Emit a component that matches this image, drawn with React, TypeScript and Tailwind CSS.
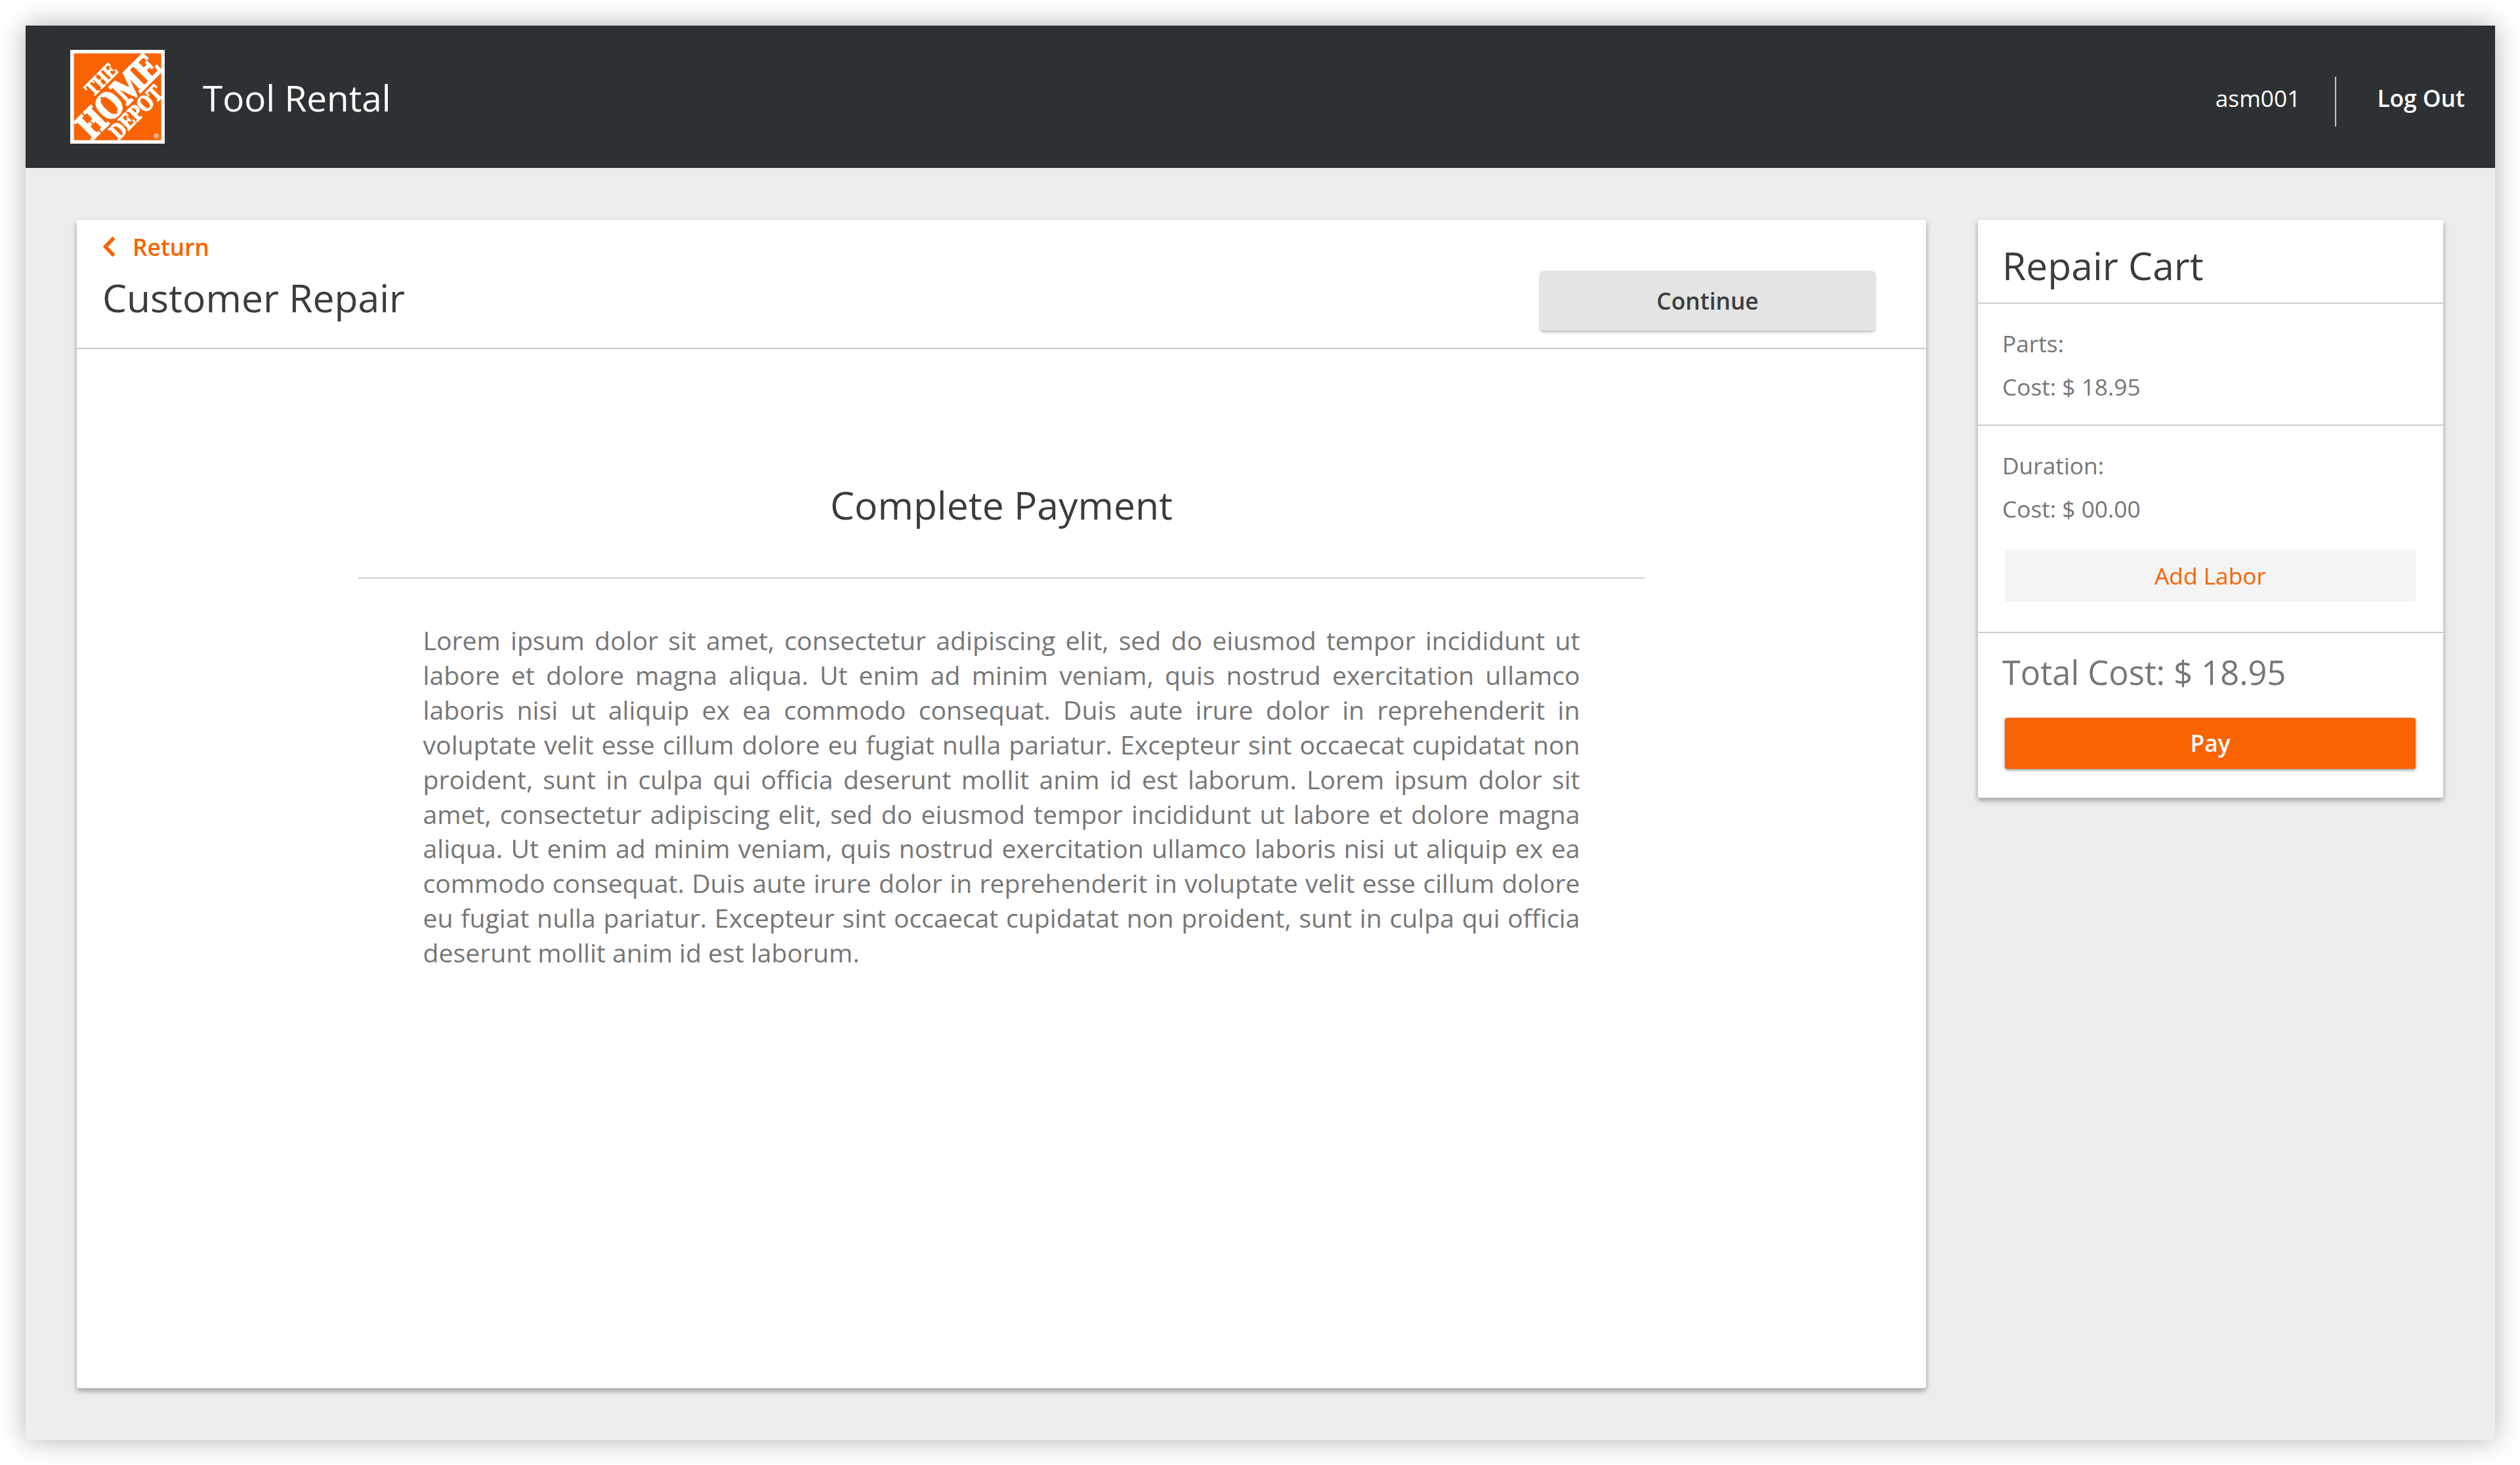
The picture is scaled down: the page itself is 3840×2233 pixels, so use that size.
import React from 'react';

const lorem =
  'Lorem ipsum dolor sit amet, consectetur adipiscing elit, sed do eiusmod tempor incididunt ut labore et dolore magna aliqua. Ut enim ad minim veniam, quis nostrud exercitation ullamco laboris nisi ut aliquip ex ea commodo consequat. Duis aute irure dolor in reprehenderit in voluptate velit esse cillum dolore eu fugiat nulla pariatur. Excepteur sint occaecat cupidatat non proident, sunt in culpa qui officia deserunt mollit anim id est laborum.';

const Logo = () => {
  return (
    <svg viewBox="20 48 431 428" className="w-[144px] h-[143px]" preserveAspectRatio="none">
      <defs>
        <clipPath id="logo-square">
          <rect x="37" y="64" width="398" height="396" />
        </clipPath>
      </defs>
      <rect x="20" y="48" width="431" height="428" fill="#fff" />
      <rect x="37" y="64" width="398" height="396" fill="#f96302" />
      <g clipPath="url(#logo-square)">
        <g transform="rotate(-45)" fill="#fff" stroke="#fff" fontFamily="'Liberation Serif', serif" fontWeight="700">
          <text x="-99" y="275" fontSize="96" strokeWidth="4" textLength="166" lengthAdjust="spacingAndGlyphs">THE</text>
          <text x="-242" y="411" fontSize="178" strokeWidth="9" textLength="458" lengthAdjust="spacingAndGlyphs">HOME</text>
          <text x="-156" y="496" fontSize="103" strokeWidth="5" textLength="297" lengthAdjust="spacingAndGlyphs">DEPOT</text>
        </g>
        {/* stencil cuts */}
        <g transform="rotate(-45)" fill="none" stroke="#f96302">
          <path d="M-74 300v104" strokeWidth="9" />
          <path d="M-186 338v30" strokeWidth="6" />
          <path d="M-16 236v14" strokeWidth="4" />
        </g>
      </g>
      <circle cx="413" cy="441" r="10.5" fill="none" stroke="#fff" strokeWidth="2.5" />
      <text x="413" y="447" fontSize="16" fontWeight="700" fill="#fff" textAnchor="middle" fontFamily="'Liberation Sans', sans-serif">R</text>
    </svg>
  );
};

const Header = () => {
  return (
    <div className="bg-[#2d3134] h-[217px] flex items-center justify-between pl-[68px] pr-[46px] text-white">
      <div className="flex items-center">
        <Logo />
        <span className="ml-[58px] mt-[3px] text-[54.9px] leading-[70px]">Tool Rental</span>
      </div>
      <div className="flex items-center mt-1">
        <span className="mb-[2px] text-[35.3px] leading-[40px]">asm001</span>
        <div className="w-[2px] h-[76px] ml-[53px] mr-[62px] mt-[10px] bg-[#c8caca]" />
        <span className="mb-[2px] text-[35.3px] leading-[40px] font-semibold">Log Out</span>
      </div>
    </div>
  );
};

const RepairPanel = () => {
  return (
    <div className="bg-white w-[2818px] h-[1781.5px] rounded-[4px] shadow-[0_4px_8px_rgba(0,0,0,0.36)]">
      <div className="flex justify-between h-[197.5px] border-b-2 border-[#cccccc] pl-[39px] pr-[78px]">
        <div className="pt-[21.5px]">
          <div className="flex items-center text-[#f96302]">
            <svg viewBox="0 0 20 32" className="w-[20px] h-[32px]">
              <path d="M17.500 2.500L4.500 16L17.500 29.500" fill="none" stroke="currentColor" strokeWidth="5.500" />
            </svg>
            <span className="ml-[26px] text-[35.3px] leading-[40px] font-semibold">Return</span>
          </div>
          <h1 className="mt-[21.5px] text-[58.8px] leading-[70px] text-[#3c3c3c]">Customer Repair</h1>
        </div>
        <button className="mt-[78px] w-[510px] h-[91px] rounded-[5px] bg-[#e4e4e4] text-[35.3px] font-semibold text-[#3c3c3c] shadow-[0_2px_4px_rgba(0,0,0,0.3)]">
          Continue
        </button>
      </div>

      <div className="flex flex-col items-center pt-[201.5px]">
        <h2 className="text-[58.8px] leading-[70px] text-[#3c3c3c]">Complete Payment</h2>
        <div className="mt-[76px] w-[1960px] h-[2px] bg-[#cccccc]" />
        <p className="mt-[68.5px] w-[1763px] text-[39.18px] leading-[52.9px] text-justify text-[#767676]">
          {`${lorem} ${lorem}`}
        </p>
      </div>
    </div>
  );
};

const RepairCart = () => {
  return (
    <div className="bg-white w-[709.5px] rounded-[4px] shadow-[0_4px_8px_rgba(0,0,0,0.36)] text-[#767676]">
      <div className="h-[128.5px] pt-[34.5px] pl-[37.5px] border-b-2 border-[#cccccc]">
        <h2 className="text-[58.8px] leading-[70px] text-[#3c3c3c]">Repair Cart</h2>
      </div>

      <div className="h-[186px] pt-[26.5px] pl-[37.5px] border-b-2 border-[#cccccc] text-[35.3px] leading-[66.5px]">
        <p>Parts:</p>
        <p>Cost: $ 18.95</p>
      </div>

      <div className="h-[316px] pt-[26.5px] pl-[37.5px] pr-[42px] border-b-2 border-[#cccccc] text-[35.3px] leading-[66.5px]">
        <p>Duration:</p>
        <p>Cost: $ 00.00</p>
        <div className="flex pl-[4px] pt-[29.5px]">
          <button className="flex-1 h-[79px] rounded-[4px] bg-[#f4f4f4] text-[#f96302]">Add Labor</button>
        </div>
      </div>

      <div className="h-[251px] pt-[30px] pl-[37.5px] pr-[42px]">
        <p className="text-[50.6px] leading-[60px]">Total Cost: $ 18.95</p>
        <div className="flex pl-[4px] pt-[38.5px]">
          <button className="flex-1 h-[78px] rounded-[4px] bg-[#f96302] text-white text-[35.3px] font-semibold shadow-[0_2px_4px_rgba(0,0,0,0.4)]">
            Pay
          </button>
        </div>
      </div>
    </div>
  );
};

const App = () => {
  return (
    <div className="w-[3840px] h-[2233px] overflow-hidden bg-white pt-[39px] pl-[39px] font-['Open_Sans',sans-serif]">
      <div className="w-[3763px] h-[2156px] bg-[#ededed] shadow-[0_0_39px_rgba(0,0,0,0.3)]">
        <Header />
        <div className="flex items-start pt-[78.5px] pl-[78px] gap-[78.5px]">
          <RepairPanel />
          <RepairCart />
        </div>
      </div>
    </div>
  );
};

export default App;
